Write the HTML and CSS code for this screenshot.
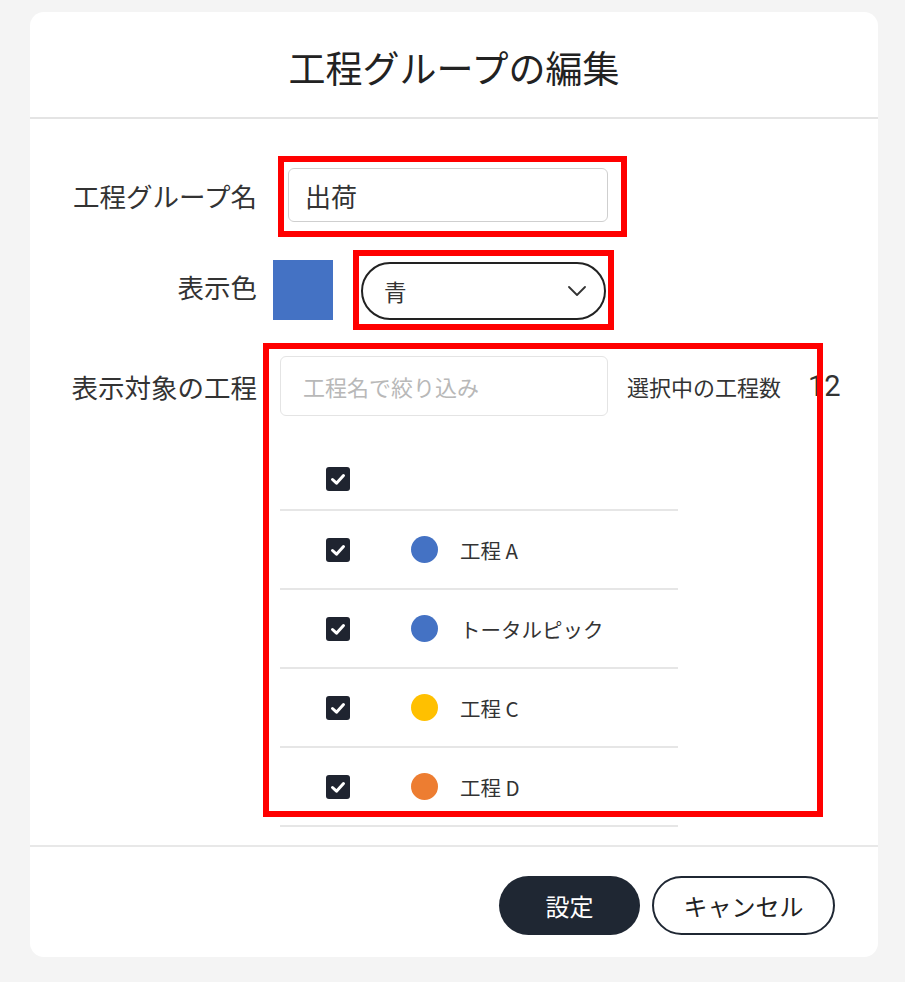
FILE: index.html
```html
<!DOCTYPE html>
<html lang="ja">

<head>
    <meta charset="UTF-8">
    <title>工程グループの編集</title>
    <link rel="stylesheet" href="styles.css">
</head>

<body>
    <div class="dialog">
        <div class="dialog-header">
            <h1>工程グループの編集</h1>
        </div>

        <div class="dialog-body">
            <div class="form-row row-name">
                <label class="form-label">工程グループ名</label>
                <input type="text" class="name-input" value="出荷">
            </div>

            <div class="form-row row-color">
                <label class="form-label">表示色</label>
                <div class="swatch"></div>
                <div class="color-select">
                    <span>青</span>
                    <svg width="18" height="10" viewBox="0 0 18 10">
                        <polyline points="1,1 9,9 17,1" fill="none" stroke="#333" stroke-width="1.8" stroke-linecap="round" stroke-linejoin="round" />
                    </svg>
                </div>
            </div>

            <div class="form-row row-filter">
                <label class="form-label">表示対象の工程</label>
                <input type="text" class="filter-input" placeholder="工程名で絞り込み">
                <span class="count-label">選択中の工程数</span>
                <span class="count-value">12</span>
            </div>

            <div class="process-list">
                <div class="process-row head">
                    <span class="check"><svg width="24" height="24" viewBox="0 0 24 24"><path d="M6.5 12.5 L10.5 16.2 L17.5 8.5" fill="none" stroke="#fff" stroke-width="3" stroke-linecap="round" stroke-linejoin="round" /></svg></span>
                </div>
                <div class="process-row">
                    <span class="check"><svg width="24" height="24" viewBox="0 0 24 24"><path d="M6.5 12.5 L10.5 16.2 L17.5 8.5" fill="none" stroke="#fff" stroke-width="3" stroke-linecap="round" stroke-linejoin="round" /></svg></span>
                    <span class="dot blue"></span>
                    <span class="process-name">工程 A</span>
                </div>
                <div class="process-row">
                    <span class="check"><svg width="24" height="24" viewBox="0 0 24 24"><path d="M6.5 12.5 L10.5 16.2 L17.5 8.5" fill="none" stroke="#fff" stroke-width="3" stroke-linecap="round" stroke-linejoin="round" /></svg></span>
                    <span class="dot blue"></span>
                    <span class="process-name">トータルピック</span>
                </div>
                <div class="process-row">
                    <span class="check"><svg width="24" height="24" viewBox="0 0 24 24"><path d="M6.5 12.5 L10.5 16.2 L17.5 8.5" fill="none" stroke="#fff" stroke-width="3" stroke-linecap="round" stroke-linejoin="round" /></svg></span>
                    <span class="dot yellow"></span>
                    <span class="process-name">工程 C</span>
                </div>
                <div class="process-row">
                    <span class="check"><svg width="24" height="24" viewBox="0 0 24 24"><path d="M6.5 12.5 L10.5 16.2 L17.5 8.5" fill="none" stroke="#fff" stroke-width="3" stroke-linecap="round" stroke-linejoin="round" /></svg></span>
                    <span class="dot orange"></span>
                    <span class="process-name">工程 D</span>
                </div>
            </div>
        </div>

        <div class="dialog-footer">
            <button class="btn btn-primary">設定</button>
            <button class="btn btn-outline">キャンセル</button>
        </div>

        <!-- annotation boxes -->
        <div class="mark mark-name"></div>
        <div class="mark mark-color"></div>
        <div class="mark mark-list"></div>
    </div>
</body>

</html>
```

FILE: styles.css
```css
body {
    margin: 0;
    background-color: #f4f4f4;
    font-family: "Noto Sans CJK JP", "Noto Sans", sans-serif;
    color: #333;
}

.dialog {
    position: relative;
    width: 848px;
    height: 945px;
    margin: 12px 0 0 30px;
    background-color: #fff;
    border-radius: 14px;
    overflow: hidden;
}

.dialog-header {
    height: 105px;
    display: flex;
    align-items: center;
    justify-content: center;
    border-bottom: 2px solid #e4e4e4;
}

.dialog-header h1 {
    margin: 4px 0 0 0;
    font-size: 37px;
    font-weight: 400;
    color: #222;
}

.dialog-body {
    height: 726px;
    overflow: hidden;
    padding-top: 49px;
    box-sizing: border-box;
}

.form-row {
    display: flex;
    align-items: center;
}

.form-label {
    width: 227px;
    flex-shrink: 0;
    text-align: right;
    font-size: 26.5px;
    color: #333;
}

.name-input {
    margin-left: 31px;
    width: 320px;
    height: 54px;
    box-sizing: border-box;
    border: 1px solid #cfcfcf;
    border-radius: 6px;
    padding: 0 16px;
    font-family: inherit;
    font-size: 26px;
    color: #333;
}

.row-color {
    margin-top: 38px;
}

.row-color .form-label {
    margin-top: -8px;
}

.swatch {
    margin-left: 16px;
    width: 60px;
    height: 60px;
    background-color: #4472c4;
}

.color-select {
    margin-left: 28px;
    width: 245px;
    height: 58px;
    box-sizing: border-box;
    border: 2px solid #222;
    border-radius: 29px;
    display: flex;
    align-items: center;
    justify-content: space-between;
    padding: 0 18px 0 21px;
    font-size: 22.5px;
    margin-top: 2px;
}

.row-filter {
    margin-top: 36px;
}

.filter-input {
    margin-left: 23px;
    width: 328px;
    height: 60px;
    box-sizing: border-box;
    border: 1px solid #e4e4e4;
    border-radius: 6px;
    padding: 0 22px;
    font-family: inherit;
    font-size: 22px;
}

.filter-input::placeholder {
    color: #b8b8b8;
}

.count-label {
    margin-left: 19px;
    font-size: 22px;
}

.count-value {
    margin-left: 27px;
    font-family: Roboto, "Noto Sans", sans-serif;
    font-size: 29px;
}

.process-list {
    margin: 33px 0 0 250px;
    width: 398px;
}

.process-row {
    height: 77px;
    border-bottom: 2px solid #e6e6e6;
    display: flex;
    align-items: center;
    padding-left: 46px;
}

.process-row.head {
    height: 60px;
}

.check {
    width: 24px;
    height: 24px;
    border-radius: 3px;
    background-color: #1f2430;
    display: flex;
}

.dot {
    margin-left: 61px;
    width: 27px;
    height: 27px;
    border-radius: 50%;
}

.dot.blue {
    background-color: #4472c4;
}

.dot.yellow {
    background-color: #ffc000;
}

.dot.orange {
    background-color: #ed7d31;
}

.process-name {
    margin-left: 22px;
    font-size: 20.5px;
    color: #333;
}

.dialog-footer {
    border-top: 2px solid #e8e8e8;
    display: flex;
    justify-content: flex-end;
    gap: 12px;
    padding: 29px 43px 0 0;
}

.btn {
    height: 59px;
    border-radius: 30px;
    font-family: inherit;
    font-size: 24px;
    cursor: pointer;
}

.btn-primary {
    width: 141px;
    border: 0;
    background-color: #1f2733;
    color: #fff;
}

.btn-outline {
    width: 183px;
    border: 2px solid #1f2733;
    background-color: #fff;
    color: #222;
}

.mark {
    position: absolute;
    border: 6px solid #f00;
    box-sizing: border-box;
    pointer-events: none;
}

.mark-name {
    left: 248px;
    top: 144px;
    width: 349px;
    height: 81px;
}

.mark-color {
    left: 323px;
    top: 238px;
    width: 261px;
    height: 80px;
}

.mark-list {
    left: 233px;
    top: 331px;
    width: 560px;
    height: 474px;
}
```
